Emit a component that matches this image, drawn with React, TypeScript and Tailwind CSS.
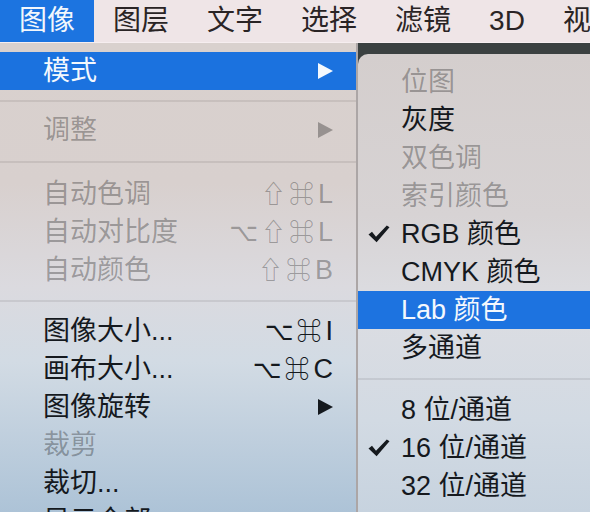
import React from 'react';

const FONT = { fontFamily: '"Liberation Sans", "Noto Sans CJK SC", "DejaVu Sans", sans-serif' };

interface LeftItem {
  label: string;
  mods?: string;
  keyName?: string;
  arrow?: boolean;
  disabled?: boolean;
  active?: boolean;
}

interface SubItem {
  label: string;
  checked?: boolean;
  disabled?: boolean;
  active?: boolean;
}

const Arrow = ({ color }: { color: string }) => (
  <svg width="15" height="16" viewBox="0 0 15 16" className="shrink-0">
    <polygon points="0,0 15,8 0,16" fill={color} />
  </svg>
);

const Check = () => (
  <svg width="22" height="18" viewBox="0 0 22 18">
    <path d="M0.5 9.5 L4 6.8 L8 11.8 L18.8 0.5 L21.5 2.2 L8.6 17.2 Z" fill="#15191e" />
  </svg>
);

const Sep = ({ h }: { h: string }) => (
  <div className={`${h} flex flex-col justify-center`}>
    <div className="h-[2px] bg-black/[0.08]" />
  </div>
);

const LeftRow = ({ item }: { item: LeftItem }) => {
  const text = item.active
    ? 'text-[#f4f8fd]'
    : item.disabled
    ? 'text-black/[0.3]'
    : 'text-[#15191e]';
  return (
    <div
      className={`h-[38px] flex items-center justify-between pl-[43px] pr-[23px] text-[27px] leading-none ${text} ${
        item.active ? 'bg-[#1b72df]' : ''
      }`}
    >
      <span>{item.label}</span>
      {item.keyName && (
        <span className="flex items-center">
          <span className="text-[25px] tracking-[3px]">{item.mods}</span>
          <span className="ml-[1px]">{item.keyName}</span>
        </span>
      )}
      {item.arrow && (
        <Arrow color={item.active ? '#f4f8fd' : item.disabled ? 'rgba(0,0,0,0.3)' : '#15191e'} />
      )}
    </div>
  );
};

const SubRow = ({ item }: { item: SubItem }) => (
  <div
    className={`h-[38px] flex items-center pl-[10px] text-[27px] leading-none ${
      item.active
        ? 'bg-[#1d73e0] text-[#f4f8fd]'
        : item.disabled
        ? 'text-black/[0.3]'
        : 'text-[#15191e]'
    }`}
  >
    <span className="w-[33px] flex items-center">{item.checked && <Check />}</span>
    <span>{item.label}</span>
  </div>
);

export default function App() {
  const bar = ['图像', '图层', '文字', '选择', '滤镜', '3D', '视图'];

  return (
    <div className="w-[590px] h-[512px] overflow-hidden flex flex-col bg-[#3b4141]" style={FONT}>
      {/* menu bar */}
      <div className="h-[43px] shrink-0 flex items-stretch bg-[#efe5e7] border-b border-[#f6eef0] text-[28px] leading-none text-[#2a2425] whitespace-nowrap">
        {bar.map((t, i) => (
          <div
            key={t}
            className={`flex items-center px-[19px] ${i === 0 ? 'bg-[#1c74e0] text-[#f2f7fc]' : ''}`}
          >
            {t}
          </div>
        ))}
      </div>

      <div className="flex flex-1 min-h-0">
        {/* image menu */}
        <div className="w-[358px] shrink-0 border-r-2 border-[#aca6a6] pt-[9px] bg-[linear-gradient(180deg,#d9d1ce_0%,#d8d0ce_30%,#dbdadf_52%,#d2dbe4_68%,#adc3d7_100%)]">
          <LeftRow item={{ label: '模式', arrow: true, active: true }} />
          <Sep h="h-[21px]" />
          <LeftRow item={{ label: '调整', arrow: true, disabled: true }} />
          <Sep h="h-[26px]" />
          <LeftRow item={{ label: '自动色调', mods: '⇧⌘', keyName: 'L', disabled: true }} />
          <LeftRow item={{ label: '自动对比度', mods: '⌥⇧⌘', keyName: 'L', disabled: true }} />
          <LeftRow item={{ label: '自动颜色', mods: '⇧⌘', keyName: 'B', disabled: true }} />
          <Sep h="h-[23px]" />
          <LeftRow item={{ label: '图像大小...', mods: '⌥⌘', keyName: 'I' }} />
          <LeftRow item={{ label: '画布大小...', mods: '⌥⌘', keyName: 'C' }} />
          <LeftRow item={{ label: '图像旋转', arrow: true }} />
          <LeftRow item={{ label: '裁剪', disabled: true }} />
          <LeftRow item={{ label: '裁切...' }} />
          <LeftRow item={{ label: '显示全部' }} />
        </div>

        {/* mode submenu */}
        <div className="flex-1 pt-[11px]">
          <div className="h-full rounded-tl-[10px] pt-[9px] bg-[linear-gradient(180deg,#d4cecd_0%,#d7d3d4_35%,#dcdde2_55%,#d2dae3_80%,#c7d3df_100%)]">
            <SubRow item={{ label: '位图', disabled: true }} />
            <SubRow item={{ label: '灰度' }} />
            <SubRow item={{ label: '双色调', disabled: true }} />
            <SubRow item={{ label: '索引颜色', disabled: true }} />
            <SubRow item={{ label: 'RGB 颜色', checked: true }} />
            <SubRow item={{ label: 'CMYK 颜色' }} />
            <SubRow item={{ label: 'Lab 颜色', active: true }} />
            <SubRow item={{ label: '多通道' }} />
            <Sep h="h-[24px]" />
            <SubRow item={{ label: '8 位/通道' }} />
            <SubRow item={{ label: '16 位/通道', checked: true }} />
            <SubRow item={{ label: '32 位/通道' }} />
          </div>
        </div>
      </div>
    </div>
  );
}
